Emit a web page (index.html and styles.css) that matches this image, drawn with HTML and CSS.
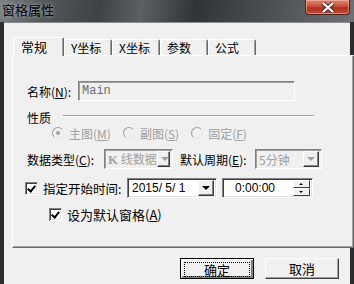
FILE: index.html
```html
<!DOCTYPE html>
<html lang="zh-CN">
<head>
  <meta charset="UTF-8">
  <title>窗格属性</title>
  <link rel="stylesheet" href="styles.css">
</head>
<body>
  <div class="window">
    <div class="titlebar">
      <span class="title">窗格属性</span>
      <span class="close">
        <svg width="14" height="11" viewBox="0 0 14 11"><path d="M2 1 L12 10 M12 1 L2 10" stroke="#3a2a2a" stroke-width="4"/><path d="M2 1 L12 10 M12 1 L2 10" stroke="#fff" stroke-width="2.2"/></svg>
      </span>
    </div>
    <div class="client">
      <div class="tabs">
        <div class="tab active">常规</div>
        <div class="tab">Y坐标</div>
        <div class="tab">X坐标</div>
        <div class="tab">参数</div>
        <div class="tab">公式</div>
      </div>
      <div class="panel">
        <div class="row name-row">
          <span class="label">名称(<u>N</u>):</span>
          <div class="field readonly">Main</div>
        </div>
        <div class="row group">
          <span>性质</span>
          <span class="rule"></span>
        </div>
        <div class="row radios">
          <span class="radio checked"></span><span class="dim">主图(<u>M</u>)</span>
          <span class="radio"></span><span class="dim">副图(<u>S</u>)</span>
          <span class="radio"></span><span class="dim">固定(<u>F</u>)</span>
        </div>
        <div class="row data-row">
          <span class="type-label">数据类型(<u>C</u>):</span>
          <div class="combo disabled combo-type"><span class="val"><b class="k">K</b> 线数据</span><span class="drop"></span></div>
          <span class="period-label">默认周期(<u>E</u>):</span>
          <div class="combo disabled combo-period"><span class="val">5分钟</span><span class="drop"></span></div>
        </div>
        <div class="row date-row">
          <span class="check on"></span>
          <span class="check-label start-label">指定开始时间:</span>
          <div class="combo date"><span class="val">2015/ 5/ 1</span><span class="drop"></span></div>
          <div class="combo time"><span class="val">0:00:00</span><span class="spin"><i class="up"></i><i class="down"></i></span></div>
        </div>
        <div class="row default-row">
          <span class="check on"></span>
          <span class="check-label">设为默认窗格(<u>A</u>)</span>
        </div>
      </div>
      <div class="buttons">
        <button class="btn default"><span>确定</span></button>
        <button class="btn">取消</button>
      </div>
    </div>
  </div>
</body>
</html>
```

FILE: styles.css
```css
html, body {
  margin: 0;
  padding: 0;
}
body {
  font-family: "Noto Sans CJK SC", "Liberation Sans", sans-serif;
  font-size: 12px;
  color: #000;
}
.window {
  width: 354px;
  height: 284px;
  background: linear-gradient(90deg, #2b2d30 0%, #1e2124 50%, #2a2c2e 100%);
  display: flex;
  flex-direction: column;
  overflow: hidden;
}
.titlebar {
  height: 22px;
  display: flex;
  justify-content: space-between;
  align-items: flex-start;
  background: linear-gradient(100deg, #7c8084 0%, #55595c 12%, #3c4245 28%, #5a6063 40%, #2f3437 55%, #4b4f52 75%, #6d7174 100%);
}
.title {
  font-size: 13px;
  line-height: 16px;
  padding: 2px 0 0 2px;
  color: #000;
  text-shadow: 0 0 4px rgba(230, 235, 240, 0.7);
}
.close {
  width: 43px;
  height: 14px;
  margin-right: 4px;
  border: 1px solid #4a2420;
  border-top: none;
  border-radius: 0 0 4px 4px;
  background: linear-gradient(#e08878 0%, #c8503c 45%, #b0301c 55%, #c24a30 100%);
  box-shadow: inset 0 0 0 1px rgba(255, 200, 190, 0.5);
  display: flex;
  align-items: center;
  justify-content: center;
}
.client {
  flex: 1;
  margin: 0 4px 0 4px;
  background: #f0f0f0;
  padding: 14px 0 0 8px;
  border-top: 1px solid #8a8e92;
}
.tabs {
  display: flex;
  align-items: flex-end;
  height: 18px;
  position: relative;
  z-index: 1;
  padding-left: 1px;
}
.tab {
  height: 15px;
  line-height: 15px;
  padding: 0 0 0 6px;
  width: 40px;
  border-top: 1px solid #fff;
  border-left: 1px solid #fff;
  border-right: 1px solid #696969;
  box-shadow: inset -1px 0 0 #a0a0a0;
  border-radius: 2px 2px 0 0;
  background: #f0f0f0;
}
.tab.active {
  height: 18px;
  line-height: 17px;
  width: 42px;
  margin-bottom: -1px;
  padding-left: 7px;
  font-size: 13px;
}
.panel {
  width: 326px;
  height: 191px;
  border-top: 1px solid #fff;
  border-left: 1px solid #fff;
  border-right: 1px solid #696969;
  border-bottom: 1px solid #696969;
  box-shadow: inset -1px -1px 0 #a0a0a0;
  background: #f0f0f0;
  display: flex;
  flex-direction: column;
  padding-left: 14px;
  box-sizing: content-box;
}
.row {
  display: flex;
  align-items: center;
  white-space: nowrap;
}
.name-row {
  margin-top: 25px;
  height: 20px;
}
.label {
  width: 51px;
}
.field {
  box-sizing: border-box;
  height: 20px;
  border-top: 1px solid #808080;
  border-left: 1px solid #808080;
  border-right: 1px solid #fff;
  border-bottom: 1px solid #fff;
  box-shadow: inset 1px 1px 0 #a0a0a0;
}
.readonly {
  width: 217px;
  padding-left: 3px;
  font-family: "Liberation Mono", monospace;
  font-size: 12px;
  line-height: 18px;
  color: #6d6d6d;
}
.group {
  margin-top: 9px;
  height: 14px;
}
.rule {
  width: 251px;
  margin-left: 12px;
  border-top: 1px solid #a0a0a0;
  border-bottom: 1px solid #fff;
  margin-top: -2px;
}
.radios {
  margin-top: 2px;
  height: 14px;
  padding-left: 25px;
}
.radio {
  width: 10px;
  height: 10px;
  border-radius: 50%;
  border: 1px solid #a0a0a0;
  border-right-color: #e8e8e8;
  border-bottom-color: #e8e8e8;
  margin-right: 5px;
  position: relative;
}
.radio.checked::after {
  content: "";
  position: absolute;
  left: 3px;
  top: 3px;
  width: 4px;
  height: 4px;
  border-radius: 50%;
  background: #a0a0a0;
}
.dim {
  color: #a0a0a0;
  margin-right: 12px;
}
.data-row {
  margin-top: 9px;
  height: 20px;
}
.type-label {
  width: 73px;
}
.period-label {
  width: 72px;
}
.combo {
  box-sizing: border-box;
  height: 20px;
  display: flex;
  align-items: center;
  border-top: 1px solid #808080;
  border-left: 1px solid #808080;
  border-right: 1px solid #fff;
  border-bottom: 1px solid #fff;
  box-shadow: inset 1px 1px 0 #404040, inset -1px -1px 0 #e3e3e3;
  background: #fff;
  padding: 2px;
}
.combo.disabled {
  background: #f0f0f0;
  box-shadow: inset 1px 1px 0 #a0a0a0;
  color: #a0a0a0;
}
.combo .val {
  flex: 1;
  padding-left: 1px;
}
.k {
  font-family: "Liberation Serif", serif;
  font-size: 13px;
}
.combo-type {
  width: 69px;
  margin: 0 7px 0 4px;
}
.combo-period {
  width: 67px;
  margin-left: 3px;
}
.drop {
  width: 16px;
  height: 16px;
  box-sizing: border-box;
  background: #f0f0f0;
  border-top: 1px solid #fff;
  border-left: 1px solid #fff;
  border-right: 1px solid #404040;
  border-bottom: 1px solid #404040;
  box-shadow: inset -1px -1px 0 #808080;
  position: relative;
}
.drop::after {
  content: "";
  position: absolute;
  left: 3px;
  top: 5px;
  border-left: 4px solid transparent;
  border-right: 4px solid transparent;
  border-top: 4px solid #000;
}
.disabled .drop::after {
  border-top-color: #a0a0a0;
}
.date-row {
  margin-top: 9px;
  margin-left: -2px;
  height: 20px;
}
.check {
  box-sizing: border-box;
  width: 13px;
  height: 13px;
  background: #fff;
  border-top: 1px solid #808080;
  border-left: 1px solid #808080;
  border-right: 1px solid #fff;
  border-bottom: 1px solid #fff;
  box-shadow: inset 1px 1px 0 #404040, inset -1px -1px 0 #e3e3e3;
  position: relative;
}
.check.on::after {
  content: "";
  position: absolute;
  left: 3px;
  top: 1px;
  width: 3px;
  height: 6px;
  border-right: 2px solid #000;
  border-bottom: 2px solid #000;
  transform: rotate(40deg);
}
.check-label {
  margin-left: 5px;
  font-size: 13px;
}
.start-label {
  width: 80px;
  font-size: 12.5px;
}
.date {
  width: 90px;
  margin-left: 4px;
  font-family: "Liberation Sans", sans-serif;
  font-size: 12px;
}
.date .val {
  padding-left: 2px;
}
.time {
  width: 91px;
  margin-left: 5px;
  font-family: "Liberation Sans", sans-serif;
  font-size: 12px;
}
.time .val {
  padding-left: 10px;
}
.spin {
  width: 17px;
  height: 16px;
  display: flex;
  flex-direction: column;
}
.spin i {
  flex: 1;
  box-sizing: border-box;
  background: #f0f0f0;
  border-top: 1px solid #fff;
  border-left: 1px solid #fff;
  border-right: 1px solid #404040;
  border-bottom: 1px solid #404040;
  position: relative;
}
.spin i::after {
  content: "";
  position: absolute;
  left: 5px;
  top: 2px;
  border-left: 2px solid transparent;
  border-right: 2px solid transparent;
}
.spin .up::after {
  border-bottom: 2px solid #000;
}
.spin .down::after {
  border-top: 2px solid #000;
}
.default-row {
  margin-top: 10px;
  height: 13px;
  padding-left: 22px;
}
.buttons {
  width: 328px;
  display: flex;
  justify-content: flex-end;
  gap: 11px;
  margin-top: 10px;
  padding-right: 1px;
  box-sizing: border-box;
}
.btn {
  width: 74px;
  height: 21px;
  font-family: inherit;
  font-size: 13px;
  padding: 0;
  background: #f0f0f0;
  border-top: 1px solid #fff;
  border-left: 1px solid #fff;
  border-right: 1px solid #404040;
  border-bottom: 1px solid #404040;
  box-shadow: inset -1px -1px 0 #a0a0a0;
  color: #000;
}
.btn.default {
  border: 1px solid #000;
  box-shadow: inset 1px 1px 0 #fff, inset -2px -2px 0 #808080;
  padding: 3px;
}
.btn.default span {
  display: block;
  height: 13px;
  line-height: 13px;
  border: 1px dotted #000;
}
```
